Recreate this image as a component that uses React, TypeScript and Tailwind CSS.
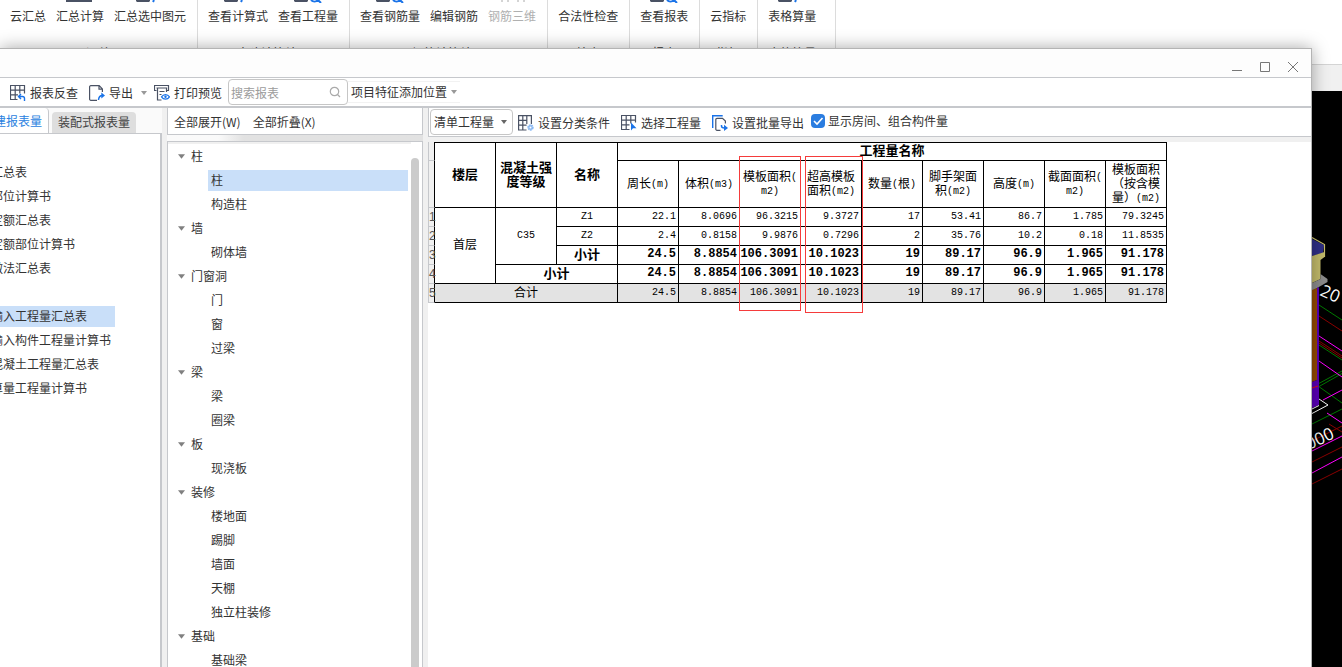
import { Fragment, type ReactNode } from 'react';
import clsx from 'clsx';

const ribbonGroups = [
  { title: '汇总', items: ['云汇总', '汇总计算', '汇总选中图元'] },
  { title: '土建计算结果', items: ['查看计算式', '查看工程量'] },
  { title: '钢筋计算结果', items: ['查看钢筋量', '编辑钢筋', '钢筋三维'] },
  { title: '检查', items: ['合法性检查'] },
  { title: '报表', items: ['查看报表'] },
  { title: '指标', items: ['云指标'] },
  { title: '表格算量', items: ['表格算量'] },
];

const disabledItems = ['钢筋三维'];
const noIcon = ['云汇总', '编辑钢筋', '合法性检查', '云指标'];
const searchIcon = ['查看工程量', '查看钢筋量', '查看报表'];

const reports = [
  '汇总表',
  '部位计算书',
  '定额汇总表',
  '定额部位计算书',
  '做法汇总表',
  '',
  '输入工程量汇总表',
  '输入构件工程量计算书',
  '混凝土工程量汇总表',
  '算量工程量计算书',
];

const tree = [
  { name: '柱', children: ['柱', '构造柱'] },
  { name: '墙', children: ['砌体墙'] },
  { name: '门窗洞', children: ['门', '窗', '过梁'] },
  { name: '梁', children: ['梁', '圈梁'] },
  { name: '板', children: ['现浇板'] },
  { name: '装修', children: ['楼地面', '踢脚', '墙面', '天棚', '独立柱装修'] },
  { name: '基础', children: ['基础梁'] },
];

const columns = [
  ['周长(m)'],
  ['体积(m3)'],
  ['模板面积(', 'm2)'],
  ['超高模板', '面积(m2)'],
  ['数量(根)'],
  ['脚手架面', '积(m2)'],
  ['高度(m)'],
  ['截面面积(', 'm2)'],
  ['模板面积', '（按含模', '量）(m2)'],
];

const z1 = ['22.1', '8.0696', '96.3215', '9.3727', '17', '53.41', '86.7', '1.785', '79.3245'];
const z2 = ['2.4', '0.8158', '9.9876', '0.7296', '2', '35.76', '10.2', '0.18', '11.8535'];
const total = ['24.5', '8.8854', '106.3091', '10.1023', '19', '89.17', '96.9', '1.965', '91.178'];

const Caret = ({ className }: { className?: string }) => (
  <svg viewBox="0 0 6 4" className={clsx('shrink-0', className)} fill="currentColor">
    <path d="M0 0h6L3 4z" />
  </svg>
);

const Icon = ({ children }: { children: ReactNode }) => (
  <svg viewBox="0 0 16 16" className="h-4 w-4 shrink-0" fill="none" stroke="#4a5264" strokeWidth="1.2">
    {children}
  </svg>
);

const GridBackIcon = () => (
  <Icon>
    <path d="M7.5 14.5h-7v-14h14v8M.5 5.2h14M.5 9.8h7.5M5.2.5v14M9.8.5v8" />
    <path d="M9 11.5h3.5a2 2 0 0 1 2 2V16M11 9l-2.5 2.5L11 14" stroke="#1a73e8" strokeWidth="1.4" />
  </Icon>
);

const ExportIcon = () => (
  <Icon>
    <path d="M8 15.3H1.8A1.2 1.2 0 0 1 .6 14V2A1.2 1.2 0 0 1 1.8.7h8.4l3.2 3.2v3M10 .7v3.4h3.4" />
    <path d="M9.5 15c.2-3 1.4-4.5 4-4.5" stroke="#1a73e8" strokeWidth="1.5" />
    <path d="M12.3 7.5 16 10.5l-3.7 3z" fill="#1a73e8" stroke="none" />
  </Icon>
);

const PrintPreviewIcon = () => (
  <Icon>
    <path d="M2.5 5.5h-2v-5h14v5h-2M2.5 3h10v4M3.5 3v12h4M5.5 6.5h5M5.5 9.5h2" />
    <path d="M7.5 11.8c2-3 6-3 8 0-2 3-6 3-8 0z" stroke="#1a73e8" />
    <circle cx="11.5" cy="11.8" r="1.2" fill="#1a73e8" stroke="none" />
  </Icon>
);

const ClassifyIcon = () => (
  <Icon>
    <path d="M8.5 15H.6V.6h12.8V9M4.8.6V15M.6 5.4h8M.6 10.2h8M8.8.6V9" />
    <circle cx="12.5" cy="12.5" r="2.2" fill="#8bb9f2" stroke="#8bb9f2" strokeWidth="2" strokeDasharray="1.5 .5" />
    <circle cx="12.5" cy="12.5" r="1" fill="#fff" stroke="none" />
  </Icon>
);

const GridSelectIcon = () => (
  <Icon>
    <path d="M8.5 14.5h-8v-14h14v7M.5 5.2h14M.5 9.8h8M5.2.5v14M9.8.5v8" />
    <path d="M10 7.5v8l2-2.2h3.5z" fill="#1a73e8" stroke="none" />
  </Icon>
);

const BatchExportIcon = () => (
  <Icon>
    <path d="M.7 13V.7h10" stroke="#1a73e8" strokeWidth="1.4" />
    <path d="M8.5 15.3H5A1.2 1.2 0 0 1 3.8 14V4.5A1.2 1.2 0 0 1 5 3.3h5.5L13.4 6v2.5" />
    <path d="M9.5 10v1c0 1.5 1 2 3 2" stroke="#1a73e8" strokeWidth="1.5" />
    <path d="M12 9.8 16 13l-4 3z" fill="#1a73e8" stroke="none" />
  </Icon>
);

// Lower edge of the large ribbon icons that are scrolled out of view
const RibbonIcon = ({ name }: { name: string }) => (
  <svg viewBox="0 0 32 3" className="h-[3px] w-8" fill="none">
    {!noIcon.includes(name) && !disabledItems.includes(name) && (
      <>
        <path d={name === '汇总计算' ? 'M2 0h26v2H2z' : 'M2 0h14v1l-1 1H3L2 1z'} fill="#4a5264" />
        {searchIcon.includes(name) && <path d="M19 0c2 2 5 2 7 0l3 3" stroke="#1a73e8" strokeWidth="2" />}
        {!searchIcon.includes(name) && name !== '汇总计算' && (
          <path d="M20 0l-1 2" stroke="#1a73e8" strokeWidth="2" />
        )}
      </>
    )}
    {disabledItems.includes(name) && <path d="M6 0v2M12 0v2M22 0v2M28 0v2" stroke="#aaa" />}
  </svg>
);

const Ribbon = () => (
  <div className="flex h-16 bg-white">
    {ribbonGroups.map((group) => (
      <div
        key={group.title}
        className="flex flex-col items-center border-r border-[#dcdcdc] pl-2.5 pr-[11px] last:pr-[19px]"
      >
        <div className="flex gap-2.5">
          {group.items.map((item) => (
            <button
              key={item}
              disabled={disabledItems.includes(item)}
              className="flex flex-col items-center gap-1 text-[#333] disabled:text-[#b0b0b0]"
            >
              <RibbonIcon name={item} />
              <span className="leading-[18px]">{item}</span>
            </button>
          ))}
        </div>
        <div className="mt-[19px] h-[18px] whitespace-nowrap leading-[18px] text-[#333]">{group.title}</div>
      </div>
    ))}
  </div>
);

// Isometric model view, only the strip beside the dialog is visible
const ModelView = () => (
  <div className="flex flex-1 justify-end overflow-hidden bg-black">
    <svg viewBox="0 91 30 576" className="h-[576px] w-[30px] shrink-0" fill="none">
      <g stroke="#007a00">
        <path d="M7 305l23 15M7 345l23 15M4 385l26-14M7 386.5l23-13M6 386l24 17M0 424l30-15" />
      </g>
      <g stroke="#8a0000">
        <path d="M7 316l23 15M7 341l23 15M7 343l23 15M17 424l13 8M0 441l30-15M0 462l30-15M0 484l30-15" />
      </g>
      <g stroke="#ff00ff">
        <path d="M7 336l23 15M7 361l23 16M11 400l19-10M15 413l15 10M0 451l30-15M0 473l30-16" />
      </g>
      <path d="M0 239l12 6-1 8-11 3z" fill="#2f2f86" />
      <path d="M0 237.5l12.5 7V257" stroke="#c9c06c" strokeWidth="1.2" />
      <path d="M0 256l12.5-4v5l-4 3v19L0 283z" fill="#c2ba6b" />
      <path d="M0 283l8.5-4v-5l7 5v3L0 291z" fill="#8c8c8c" />
      <path d="M0 290l5-2v92l-5 2z" fill="#944b00" />
      <path d="M5 288l2-1v118l-7 3v-26l5-2z" fill="#5a00b8" />
      <path d="M0 388l6-2" stroke="#e01010" />
      <path d="M7 399l9 6-16 8.5M0 409l7-3.5" stroke="#fff" />
      <g fill="#fff" fontFamily="'Open Sans', sans-serif" fontSize="17">
        <text x="7" y="295" transform="rotate(24 7 295)">
          20
        </text>
        <text x="-3" y="450" transform="rotate(-25 -3 450)">
          000
        </text>
      </g>
    </svg>
  </div>
);

const TitleBar = () => (
  <div className="flex h-[29px] shrink-0 items-end justify-end gap-[18px] border-b border-[#c6c8cc] bg-[#fdfdfd] pb-[5px] pr-[13px] text-[#777]">
    <button aria-label="最小化">
      <svg viewBox="0 0 10 10" className="h-2.5 w-2.5" stroke="currentColor">
        <path d="M0 8.5h10" />
      </svg>
    </button>
    <button aria-label="最大化">
      <svg viewBox="0 0 10 10" className="h-2.5 w-2.5" fill="none" stroke="currentColor">
        <path d="M.5.5h9v9h-9z" />
      </svg>
    </button>
    <button aria-label="关闭">
      <svg viewBox="0 0 10 10" className="h-2.5 w-2.5" stroke="currentColor">
        <path d="M0 0l10 10M10 0L0 10" />
      </svg>
    </button>
  </div>
);

const MainToolbar = () => (
  <div className="flex h-[30px] shrink-0 items-center border-b-2 border-[#c6c8cc] bg-white pl-2.5">
    <button className="flex items-center gap-1 pt-0.5">
      <GridBackIcon />
      报表反查
    </button>
    <button className="ml-[11px] flex items-center gap-1 pt-0.5">
      <ExportIcon />
      导出
      <Caret className="ml-1 h-1 w-1.5 text-[#999]" />
    </button>
    <button className="ml-[7px] flex items-center gap-1 pt-0.5">
      <PrintPreviewIcon />
      打印预览
    </button>
    <label className="relative ml-1.5">
      <input
        type="text"
        aria-label="搜索报表"
        placeholder="搜索报表"
        className="block h-[26px] w-[120px] rounded border border-[#c6c6c6] bg-white pl-0.5 pr-5 placeholder:text-[#9c9c9c]"
      />
      <svg
        viewBox="0 0 12 12"
        className="absolute right-[7px] top-[7px] h-3 w-3"
        fill="none"
        stroke="#aaa"
        strokeWidth="1.2"
      >
        <circle cx="5.5" cy="5.5" r="4.2" />
        <path d="M8.5 8.5L11 11" />
      </svg>
    </label>
    <button className="flex h-[22px] items-center gap-1 border-y border-[#f2f2f2] px-[3px]">
      项目特征添加位置
      <Caret className="h-1 w-1.5 text-[#999]" />
    </button>
  </div>
);

const ReportPanel = () => (
  <div className="flex w-[162px] shrink-0 flex-col">
    <div className="flex h-[25px] items-end bg-[#fafafa]">
      <button className="-ml-1.5 h-[25px] rounded-tr border-r border-[#c6c8cc] bg-white pr-1.5 text-[#2b82e0]">
        建报表量
      </button>
      <button className="ml-[3px] h-[21px] rounded-t-sm bg-[#dedede] px-1.5 pb-0.5 text-[#444]">
        装配式报表量
      </button>
    </div>
    <ul className="flex-1 overflow-hidden border-r-2 border-t border-[#c6c8cc] bg-white pt-7">
      {reports.map((name, i) => (
        <li key={i} className="h-6">
          {name && (
            <button
              className={clsx(
                '-ml-[9px] block h-[21px] whitespace-nowrap pb-0.5 text-left',
                name === '输入工程量汇总表' && 'w-[124px] bg-[#c9dff9]',
              )}
            >
              {name}
            </button>
          )}
        </li>
      ))}
    </ul>
  </div>
);

const ComponentTree = () => (
  <div className="flex w-64 shrink-0 flex-col">
    <div className="flex h-[27px] items-center gap-3 border border-t-0 border-[#c6c8cc] bg-white pl-1.5 pt-0.5">
      <button>全部展开(W)</button>
      <button>全部折叠(X)</button>
    </div>
    <div className="h-1.5 bg-gradient-to-r from-[#fafafa] from-20% to-[#e2e2e2] to-30%" />
    <div className="flex flex-1 overflow-hidden border-x border-t border-[#c6c8cc] bg-white">
      <ul className="flex-1 border-t-2 border-[#f0f0f0]">
        {tree.map((group) => (
          <Fragment key={group.name}>
            <li className="flex h-6 items-center pl-2.5">
              <button className="flex items-center gap-1.5">
                <Caret className="h-[5px] w-[7px] text-[#808080]" />
                {group.name}
              </button>
            </li>
            {group.children.map((child) => (
              <li key={child} className="flex h-6 items-center pl-10">
                <button
                  className={clsx(
                    'h-[21px] w-[200px] pl-[3px] text-left',
                    group.name === '柱' && child === '柱' && 'bg-[#c9dff9]',
                  )}
                >
                  {child}
                </button>
              </li>
            ))}
          </Fragment>
        ))}
      </ul>
      <div className="mr-[3px] mt-4 w-2 rounded-t bg-[#cbcbcb]" />
    </div>
  </div>
);

const TableToolbar = () => (
  <div className="flex h-[29px] shrink-0 items-center border-b border-l border-[#c6c8cc] bg-white pl-px">
    <div className="relative">
      <select
        aria-label="工程量类型"
        className="block h-[26px] w-[83px] appearance-none rounded border border-[#c6c6c6] bg-white pl-[3px]"
      >
        <option>清单工程量</option>
      </select>
      <Caret className="pointer-events-none absolute right-1.5 top-[11px] h-1 w-1.5 text-[#666]" />
    </div>
    <button className="ml-[5px] flex items-center gap-1 pt-0.5">
      <ClassifyIcon />
      设置分类条件
    </button>
    <button className="ml-[11px] flex items-center gap-1 pt-0.5">
      <GridSelectIcon />
      选择工程量
    </button>
    <button className="ml-[11px] flex items-center gap-1 pt-0.5">
      <BatchExportIcon />
      设置批量导出
    </button>
    <label className="ml-[7px] flex items-center gap-[3px] pb-0.5">
      <span className="relative block h-3.5 w-3.5">
        <input
          type="checkbox"
          defaultChecked
          className="block h-3.5 w-3.5 appearance-none rounded-sm bg-white checked:bg-[#2b7de0]"
        />
        <svg
          viewBox="0 0 14 14"
          className="pointer-events-none absolute inset-0"
          fill="none"
          stroke="#fff"
          strokeWidth="1.6"
        >
          <path d="M3 7l3 3 5.5-6" />
        </svg>
      </span>
      显示房间、组合构件量
    </label>
  </div>
);

// Latin runs sit at half the width of a Chinese glyph
const MixedText = ({ text }: { text: string }) =>
  text.split(/([\x20-\x7e]+)/).map((part, i) =>
    /^[\x20-\x7e]+$/.test(part) ? (
      <span key={i} className="align-[1px] font-['Liberation_Mono',monospace] text-[10px]">
        {part}
      </span>
    ) : (
      part
    ),
  );

const RowNumber = ({ n }: { n?: number }) => (
  <th className="border-b border-l border-r border-b-[#c6c8cc] border-l-[#c6c8cc] border-r-black bg-[#f0f0f0] font-['Liberation_Sans',sans-serif] font-normal text-[#555]">
    {n}
  </th>
);

const cell = 'border-b border-r border-black';
const textCell = 'border-b border-r border-black pb-[3px]';
const codeCell = "border-b border-r border-black font-['Liberation_Mono',monospace] text-[10px]";

const Numbers = ({ values, bold }: { values: string[]; bold?: boolean }) =>
  values.map((value, i) => (
    <td
      key={i}
      className={clsx(
        cell,
        "pr-0.5 text-right font-['Liberation_Mono',monospace]",
        bold ? 'pb-0.5 text-xs font-bold' : 'text-[10px]',
      )}
    >
      {value}
    </td>
  ));

const QuantityTable = () => (
  <div className="relative w-[739px]">
    <table className="w-full table-fixed border-separate border-spacing-0 text-center leading-[14px] text-black">
      <colgroup>
        <col className="w-[7px]" />
        {Array.from({ length: 12 }, (_, i) => (
          <col key={i} className="w-[61px]" />
        ))}
      </colgroup>
      <thead>
        <tr className="h-[19px] text-[13px]">
          <RowNumber />
          <th rowSpan={2} className={clsx(textCell, 'border-t')}>
            楼层
          </th>
          <th rowSpan={2} className={clsx(textCell, 'border-t')}>
            混凝土强度等级
          </th>
          <th rowSpan={2} className={clsx(textCell, 'border-t')}>
            名称
          </th>
          <th colSpan={9} className={clsx(textCell, 'border-t')}>
            工程量名称
          </th>
        </tr>
        <tr className="h-[47px]">
          <RowNumber />
          {columns.map((lines) => (
            <th key={lines.join('')} className={clsx(textCell, 'whitespace-nowrap font-normal')}>
              {lines.map((line) => (
                <div key={line} className="h-3.5">
                  <MixedText text={line} />
                </div>
              ))}
            </th>
          ))}
        </tr>
      </thead>
      <tbody>
        <tr className="h-[19px]">
          <RowNumber n={1} />
          <td rowSpan={4} className={textCell}>
            首层
          </td>
          <td rowSpan={3} className={codeCell}>
            C35
          </td>
          <td className={codeCell}>Z1</td>
          <Numbers values={z1} />
        </tr>
        <tr className="h-[19px]">
          <RowNumber n={2} />
          <td className={codeCell}>Z2</td>
          <Numbers values={z2} />
        </tr>
        <tr className="h-[19px]">
          <RowNumber n={3} />
          <td className={clsx(textCell, 'text-[13px] font-bold')}>小计</td>
          <Numbers values={total} bold />
        </tr>
        <tr className="h-[19px]">
          <RowNumber n={4} />
          <td colSpan={2} className={clsx(textCell, 'text-[13px] font-bold')}>
            小计
          </td>
          <Numbers values={total} bold />
        </tr>
        <tr className="h-[19px] bg-[#e3e3e3]">
          <RowNumber n={5} />
          <td colSpan={3} className={textCell}>
            合计
          </td>
          <Numbers values={total} />
        </tr>
      </tbody>
    </table>
    {/* Formwork columns marked in red */}
    <div className="pointer-events-none absolute left-[311px] top-3.5 h-[155px] w-[62px] border border-[#f53b3b]" />
    <div className="pointer-events-none absolute left-[377px] top-3.5 h-[157px] w-[58px] border border-[#f53b3b]" />
  </div>
);

const ReportDialog = () => (
  <div
    role="dialog"
    aria-label="报表"
    className="absolute bottom-0 left-0 right-[30px] top-12 flex flex-col border-r border-t border-[#b4b4b4] bg-[#f0f0f0] shadow-[0_0_16px_rgba(0,0,0,0.35)]"
  >
    <TitleBar />
    <MainToolbar />
    <div className="flex min-h-0 flex-1">
      <ReportPanel />
      <div className="ml-[5px] flex">
        <ComponentTree />
      </div>
      <div className="ml-[5px] flex min-w-0 flex-1 flex-col">
        <TableToolbar />
        <div className="mt-[5px] flex-1 overflow-hidden bg-white">
          <QuantityTable />
        </div>
      </div>
    </div>
  </div>
);

export default function App() {
  return (
    <div className="relative flex h-screen flex-col overflow-hidden bg-white font-['Noto_Sans_CJK_SC',sans-serif] text-xs text-[#333]">
      <Ribbon />
      <div className="h-[27px] shrink-0 border-t border-[#d4d4d4] bg-[#f0f0f0]" />
      <ModelView />
      <ReportDialog />
    </div>
  );
}
